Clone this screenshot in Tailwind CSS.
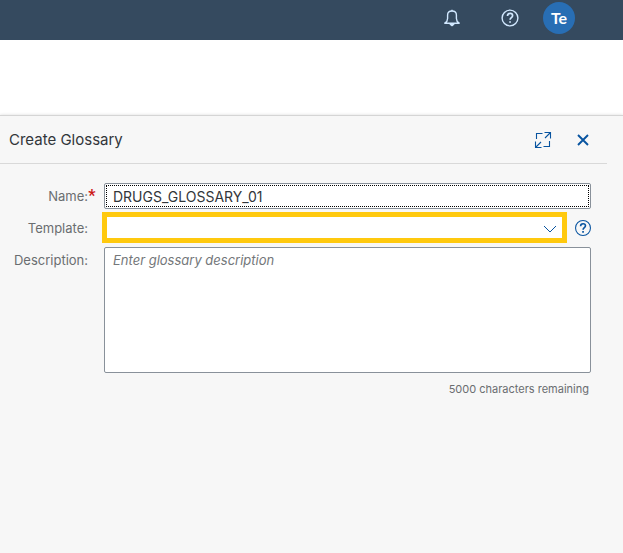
<!DOCTYPE html>
<html lang="en">
<head>
<meta charset="utf-8">
<meta name="viewport" content="width=device-width, initial-scale=1">
<title>Create Glossary</title>
<script src="https://cdn.jsdelivr.net/npm/@tailwindcss/browser@4"></script>
</head>
<body class="flex min-h-screen flex-col bg-[#f7f7f7] font-['Inter',sans-serif] text-[13px] text-[#32363a]">
  <header class="flex h-10 items-center justify-end bg-[#354a5f] pr-12 pb-1 text-[#d1e8ff]">
    <button type="button" aria-label="Notifications" class="mr-10 flex size-[18px] items-center justify-center">
      <svg class="size-[18px]" viewBox="0 0 18 18" fill="none" stroke="currentColor" stroke-width="1.4" stroke-linejoin="round"><path d="M1.800 14.200c1.800-1.200 2.800-2.500 2.800-4.800V6C4.600 3.600 6.300 2 9 2s4.400 1.600 4.400 4v3.400c0 2.300 1 3.600 2.800 4.800z"/><path d="M7.200 15.200h3.600L9 16.600zM8.300 1.500h1.400" fill="currentColor"/></svg>
    </button>
    <button type="button" aria-label="Help" class="mr-6 flex size-[18px] items-center justify-center">
      <svg class="size-[18px]" viewBox="0 0 18 18" fill="none" stroke="currentColor" stroke-width="1.400"><circle cx="9" cy="9" r="7.900"/><path d="M6.500 7c0-1.600 1-2.600 2.600-2.600s2.500.9 2.500 2.300c0 2-2.500 1.900-2.500 4.100" stroke-width="1.700"/><path d="M8.200 12.200h1.700v1.600H8.200z" fill="currentColor" stroke="none"/></svg>
    </button>
    <button type="button" aria-label="User Te" class="flex size-8 items-center justify-center rounded-full bg-[#286eb4] font-['Lato',sans-serif] text-base font-bold text-white">Te</button>
  </header>
  <div class="h-[75px] shrink-0 bg-white"></div>
  <main class="relative grow border-t border-[#d5d5d5] shadow-[0_0_3px_rgba(0,0,0,0.15)]">
    <div class="mr-4 flex h-12 items-center border-b border-[#d9d9d9] pr-4 pl-[9px]">
      <h1 class="grow pt-0.5 text-[15px]">Create Glossary</h1>
      <button type="button" aria-label="Full screen" class="mr-[23px] text-[#0854a0]">
        <svg class="size-[18px]" viewBox="0 0 18 18" fill="none" stroke="currentColor" stroke-width="1.100"><path d="M10.500 1.500h6v6M16.500 1.500l-5.500 5.500M7.500 16.500h-6v-6M1.500 16.500L7 11M8.500 2.500H2.500v5.500M9.500 15.500h6V10"/></svg>
      </button>
      <button type="button" aria-label="Close" class="text-[#0854a0]">
        <svg class="size-4" viewBox="0 0 16 16" fill="none" stroke="currentColor" stroke-width="1.900"><path d="M3 3l10 10M13 3L3 13"/></svg>
      </button>
    </div>
    <form class="mr-8 mt-[19px] grid grid-cols-[88px_minmax(0,1fr)] gap-x-4 gap-y-1.5">
      <label for="name" class="-mr-2 h-[26px] text-right leading-[26px] text-[#6a6d70]">Name:<span class="inline-block w-2 text-center font-['Roboto',sans-serif] text-base font-bold leading-none text-[#cc1919]">*</span></label>
      <div class="h-[26px] rounded-xs border border-[#89919a] bg-white p-px">
        <input id="name" type="text" required value="DRUGS_GLOSSARY_01" class="block h-full w-full border border-dotted border-black bg-transparent px-1.5 text-sm outline-none">
      </div>
      <label for="template" class="h-[26px] text-right leading-[26px] text-[#6a6d70]">Template:</label>
      <div class="flex h-[26px] items-center gap-2.5">
        <div class="relative -mt-px h-[27px] grow">
          <select id="template" class="block h-full w-full appearance-none border-3 border-[#ffc90e] bg-white outline-2 outline-[#ffc90e]"><option></option></select>
          <svg class="pointer-events-none absolute top-[7px] right-[7px] size-4 text-[#0854a0]" viewBox="0 0 16 16" fill="none" stroke="currentColor" stroke-width="1"><path d="M2 5l6 6 6-6"/></svg>
        </div>
        <button type="button" aria-label="Template help" class="text-[#0854a0]">
          <svg class="size-4" viewBox="0 0 18 18" fill="none" stroke="currentColor" stroke-width="1.200"><circle cx="9" cy="9" r="8.400"/><path d="M6.300 7c0-1.700 1-2.800 2.800-2.800s2.700.9 2.700 2.400c0 2-2.700 2-2.700 4.300" stroke-width="1.800"/><path d="M8.100 12.500H10v1.800H8.100z" fill="currentColor" stroke="none"/></svg>
        </button>
      </div>
      <label for="description" class="h-[26px] text-right leading-[26px] text-[#6a6d70]">Description:</label>
      <div>
        <textarea id="description" placeholder="Enter glossary description" class="block h-[126px] w-full resize-none rounded-xs border border-[#89919a] bg-white px-2 py-[3px] leading-[18px] outline-none placeholder:text-[#74777a] placeholder:italic"></textarea>
        <p class="mt-2 pr-0.5 text-right text-[11px] leading-4 text-[#6a6d70]">5000 characters remaining</p>
      </div>
    </form>
  </main>
</body>
</html>
